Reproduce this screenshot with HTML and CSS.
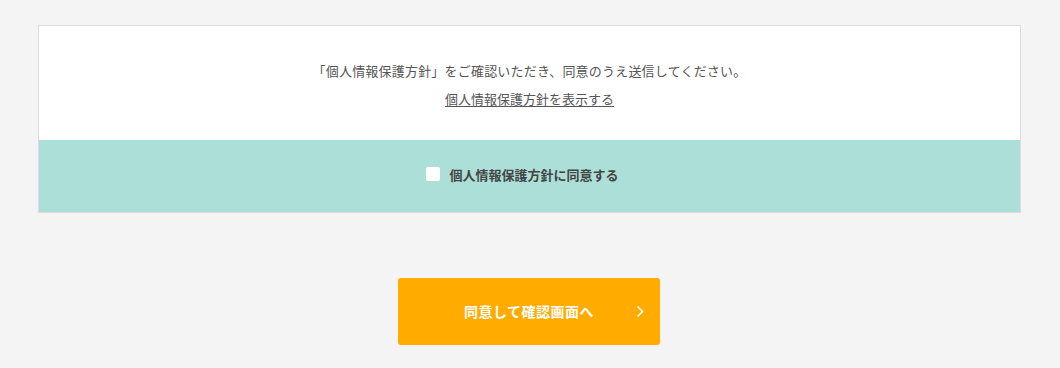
FILE: index.html
```html
<!doctype html>
<html lang="ja">

<head>
    <meta charset="UTF-8" />
    <meta name="viewport" content="width=device-width, initial-scale=1.0" />
    <title>個人情報保護方針</title>
    <link rel="stylesheet" href="styles.css">
</head>

<body>
    <div class="privacy-box">
        <div class="privacy-info">
            <p class="privacy-text">「個人情報保護方針」をご確認いただき、同意のうえ送信してください。</p>
            <a class="privacy-link" href="#">個人情報保護方針を表示する</a>
        </div>
        <div class="privacy-agree">
            <label class="agree-label">
                <input type="checkbox" class="agree-check">
                <span>個人情報保護方針に同意する</span>
            </label>
        </div>
    </div>

    <div class="submit-area">
        <button class="submit-btn" type="button">
            <span class="submit-text">同意して確認画面へ</span>
            <svg class="submit-arrow" width="8" height="13" viewBox="0 0 8 13">
                <path d="M1.5 1.5 L6.5 6.5 L1.5 11.5" fill="none" stroke="#fff" stroke-width="1.5" />
            </svg>
        </button>
    </div>
</body>

</html>
```

FILE: styles.css
```css
body {
    margin: 0;
    padding: 25px 39px 0 38px;
    background: #f4f4f4;
    font-family: "Noto Sans CJK JP", "Noto Sans", sans-serif;
    color: #555;
}

.privacy-box {
    border: 1px solid #dcdcdc;
    background: #fff;
}

.privacy-info {
    height: 114px;
    box-sizing: border-box;
    padding-top: 35px;
    text-align: center;
}

.privacy-text {
    margin: 0;
    font-size: 13px;
    line-height: 20px;
    letter-spacing: 0.2px;
}

.privacy-link {
    display: inline-block;
    margin-top: 8px;
    font-size: 13px;
    line-height: 20px;
    color: #555;
    text-decoration: underline;
    text-underline-offset: 2px;
}

.privacy-agree {
    height: 72px;
    box-sizing: border-box;
    background: #abdfd7;
    display: flex;
    align-items: center;
    justify-content: center;
    padding: 0 14px 4px 0;
}

.agree-label {
    display: flex;
    align-items: center;
    gap: 9px;
    font-size: 13px;
    font-weight: bold;
    color: #444;
    cursor: pointer;
}

.agree-check {
    appearance: none;
    margin: 0;
    width: 14px;
    height: 14px;
    background: #fff;
    border-radius: 2px;
}

.submit-area {
    display: flex;
    justify-content: center;
    padding: 65px 1px 0 0;
}

.submit-btn {
    position: relative;
    width: 262px;
    height: 67px;
    border: none;
    border-radius: 3px;
    background: #ffab00;
    color: #fff;
    font-family: inherit;
    font-size: 14px;
    font-weight: bold;
    letter-spacing: 0.5px;
    padding-bottom: 2px;
    cursor: pointer;
}

.submit-arrow {
    position: absolute;
    right: 16px;
    top: 27px;
}
```
